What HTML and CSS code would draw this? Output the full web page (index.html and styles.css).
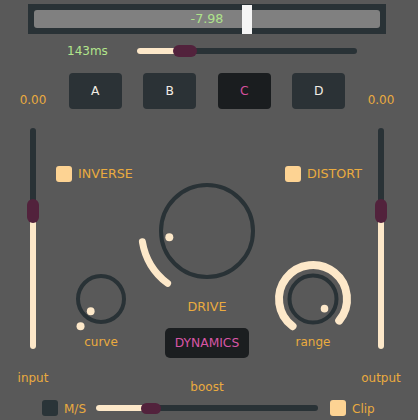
FILE: index.html
```html
<!DOCTYPE html>
<html>
<head>
<meta charset="utf-8">
<link rel="stylesheet" href="styles.css">
</head>
<body>
<div class="plugin">
  <div class="meter">
    <div class="meter-bar"><span class="meter-value">-7.98</span></div>
    <div class="meter-mark"></div>
  </div>

  <div class="delay-row">
    <span class="delay-label">143ms</span>
    <div class="hslider delay-slider">
      <div class="hfill" style="width:40px"></div>
      <div class="hthumb" style="left:36px"></div>
    </div>
  </div>

  <div class="main">
    <div class="side">
      <span class="value">0.00</span>
      <div class="vslider">
        <div class="vfill" style="height:140px"></div>
        <div class="vthumb" style="top:71px"></div>
      </div>
      <span class="side-label">input</span>
    </div>

    <div class="center">
      <div class="pads">
        <button class="pad">A</button>
        <button class="pad">B</button>
        <button class="pad pad-active">C</button>
        <button class="pad">D</button>
      </div>

      <div class="checks">
        <label class="check"><span class="box box-on"></span><span class="check-text">INVERSE</span></label>
        <label class="check"><span class="box box-on"></span><span class="check-text">DISTORT</span></label>
      </div>

      <div class="knobs">
        <div class="knob-small">
          <svg class="knob-svg-small" width="56" height="56" viewBox="-28 -28 56 56">
            <circle cx="0" cy="0" r="23" class="knob-ring"/>
            <circle cx="-20.46" cy="27.15" r="4" class="knob-fill"/>
            <circle cx="-10.28" cy="12.26" r="3.9" class="knob-fill"/>
          </svg>
          <span class="knob-label">curve</span>
        </div>

        <div class="knob-main">
          <svg class="knob-svg-main" width="96" height="96" viewBox="-48 -48 96 96">
            <circle cx="0" cy="0" r="46" class="knob-ring"/>
            <path d="M -39.42 52.31 A 65.5 65.5 0 0 1 -64.6 10.81" class="knob-arc knob-arc-main"/>
            <circle cx="-37.68" cy="6.3" r="4" class="knob-fill"/>
          </svg>
          <span class="drive-label">DRIVE</span>
          <button class="dyn-btn">DYNAMICS</button>
        </div>

        <div class="knob-small">
          <svg class="knob-svg-small" width="56" height="56" viewBox="-28 -28 56 56">
            <circle cx="0" cy="0" r="23.5" class="knob-ring"/>
            <path d="M -20.46 27.15 A 34 34 0 1 1 26.23 21.62" class="knob-arc knob-arc-small"/>
            <circle cx="11.49" cy="9.64" r="3.8" class="knob-fill"/>
          </svg>
          <span class="knob-label">range</span>
        </div>
      </div>

      <span class="boost-label">boost</span>
    </div>

    <div class="side">
      <span class="value">0.00</span>
      <div class="vslider">
        <div class="vfill" style="height:140px"></div>
        <div class="vthumb" style="top:71px"></div>
      </div>
      <span class="side-label">output</span>
    </div>
  </div>

  <div class="bottom-row">
    <span class="box box-off"></span>
    <span class="bottom-text">M/S</span>
    <div class="hslider boost-slider">
      <div class="hfill" style="width:49px"></div>
      <div class="hthumb hthumb-small" style="left:45px"></div>
    </div>
    <span class="box box-on clip-box"></span>
    <span class="bottom-text">Clip</span>
  </div>
</div>
</body>
</html>
```

FILE: styles.css
```css
html, body {
  margin: 0;
  padding: 0;
}
body {
  background: #595959;
  font-family: "DejaVu Sans", Verdana, sans-serif;
  font-size: 12px;
  width: 418px;
  height: 420px;
  overflow: hidden;
}
.plugin {
  width: 418px;
  height: 420px;
  display: flex;
  flex-direction: column;
}

/* meter */
.meter {
  position: relative;
  margin: 4px 0 0 28px;
  width: 358px;
  height: 30px;
  box-sizing: border-box;
  padding: 6px;
  background: #293236;
}
.meter-bar {
  height: 18px;
  background: #808080;
  border-radius: 3px;
  display: flex;
  justify-content: center;
}
.meter-value {
  color: #aee38b;
  font-size: 12.7px;
  line-height: 18px;
}
.meter-mark {
  position: absolute;
  left: 214px;
  top: 1px;
  width: 10px;
  height: 29px;
  background: #f5f5f5;
}

/* delay row */
.delay-row {
  margin-top: 10px;
  height: 14px;
  display: flex;
  align-items: center;
}
.delay-label {
  margin-left: 67px;
  width: 70px;
  color: #b2e58c;
  line-height: 14px;
}
.hslider {
  position: relative;
  height: 6px;
  border-radius: 3px;
  background: #293236;
}
.delay-slider {
  width: 220px;
}
.hfill {
  position: absolute;
  left: 0;
  top: 0;
  height: 6px;
  border-radius: 3px;
  background: #fde8c9;
}
.hthumb {
  position: absolute;
  top: -3px;
  width: 24px;
  height: 12px;
  border-radius: 6px;
  background: #52223c;
}
.hthumb-small {
  top: -2.5px;
  width: 20px;
  height: 11px;
  border-radius: 5.5px;
}

/* main grid */
.main {
  margin: 15px 0 0 13px;
  display: grid;
  grid-template-columns: 40px 308px 40px;
}
.side {
  display: flex;
  flex-direction: column;
  align-items: center;
}
.value {
  margin-top: 20px;
  line-height: 14px;
  color: #eaab3f;
}
.vslider {
  position: relative;
  margin-top: 21px;
  width: 6px;
  height: 221px;
  border-radius: 3px;
  background: #293236;
}
.vfill {
  position: absolute;
  left: 0;
  bottom: 0;
  width: 6px;
  border-radius: 3px;
  background: #fde8c9;
}
.vthumb {
  position: absolute;
  left: -3.3px;
  width: 12.6px;
  height: 24px;
  border-radius: 6px;
  background: #52223c;
}
.side-label {
  margin-top: 22px;
  line-height: 14px;
  color: #eaab3f;
}

/* center */
.center {
  display: flex;
  flex-direction: column;
}
.pads {
  display: flex;
  justify-content: center;
  gap: 21.5px;
}
.pad {
  width: 53px;
  height: 36px;
  border: none;
  border-radius: 4px;
  background: #2b3236;
  color: #f2ede4;
  font-family: "DejaVu Sans", Verdana, sans-serif;
  font-size: 12.3px;
  padding: 0;
}
.pad-active {
  background: #1a1d1f;
  color: #d4509e;
}
.checks {
  margin-top: 56px;
  height: 17px;
  padding-left: 3px;
  margin-right: -1px;
  display: flex;
  justify-content: space-between;
  align-items: center;
}
.check {
  display: flex;
  align-items: center;
  gap: 6px;
}
.box {
  display: block;
  width: 16px;
  height: 16px;
  border-radius: 3px;
}
.box-on {
  background: #fdd393;
}
.box-off {
  background: #2a3438;
}
.check-text {
  color: #eaab3f;
  font-size: 12.7px;
  line-height: 14px;
}

/* knobs */
.knobs {
  margin-top: 1px;
  display: grid;
  grid-template-columns: 96px 1fr 96px;
}
.knob-small {
  padding-top: 88px;
  display: flex;
  flex-direction: column;
  align-items: center;
  align-self: start;
}
.knob-main {
  display: flex;
  flex-direction: column;
  align-items: center;
}
svg {
  display: block;
  overflow: visible;
}
.knob-ring {
  fill: none;
  stroke: #293236;
  stroke-width: 4;
}
.knob-fill {
  fill: #fde8c9;
}
.knob-arc {
  fill: none;
  stroke: #fde8c9;
  stroke-linecap: round;
}
.knob-arc-main {
  stroke-width: 7;
}
.knob-arc-small {
  stroke-width: 8;
}
.knob-label {
  margin-top: 8px;
  line-height: 14px;
  color: #eaab3f;
}
.drive-label {
  margin-top: 21px;
  font-size: 12.7px;
  line-height: 14px;
  color: #eaab3f;
}
.dyn-btn {
  margin-top: 14px;
  width: 84px;
  height: 30px;
  border: none;
  border-radius: 5px;
  background: #1b1e20;
  color: #d756a6;
  font-family: "DejaVu Sans", Verdana, sans-serif;
  font-size: 12.3px;
  padding: 0;
}
.boost-label {
  margin-top: 22px;
  line-height: 14px;
  color: #eaab3f;
  text-align: center;
}

/* bottom row */
.bottom-row {
  margin-top: 6px;
  height: 16px;
  padding-left: 42px;
  display: flex;
  align-items: center;
}
.bottom-text {
  margin-left: 6px;
  line-height: 14px;
  padding-top: 2px;
  color: #eaab3f;
}
.boost-slider {
  margin-left: 10px;
  width: 222px;
}
.clip-box {
  margin-left: 12px;
}
```
